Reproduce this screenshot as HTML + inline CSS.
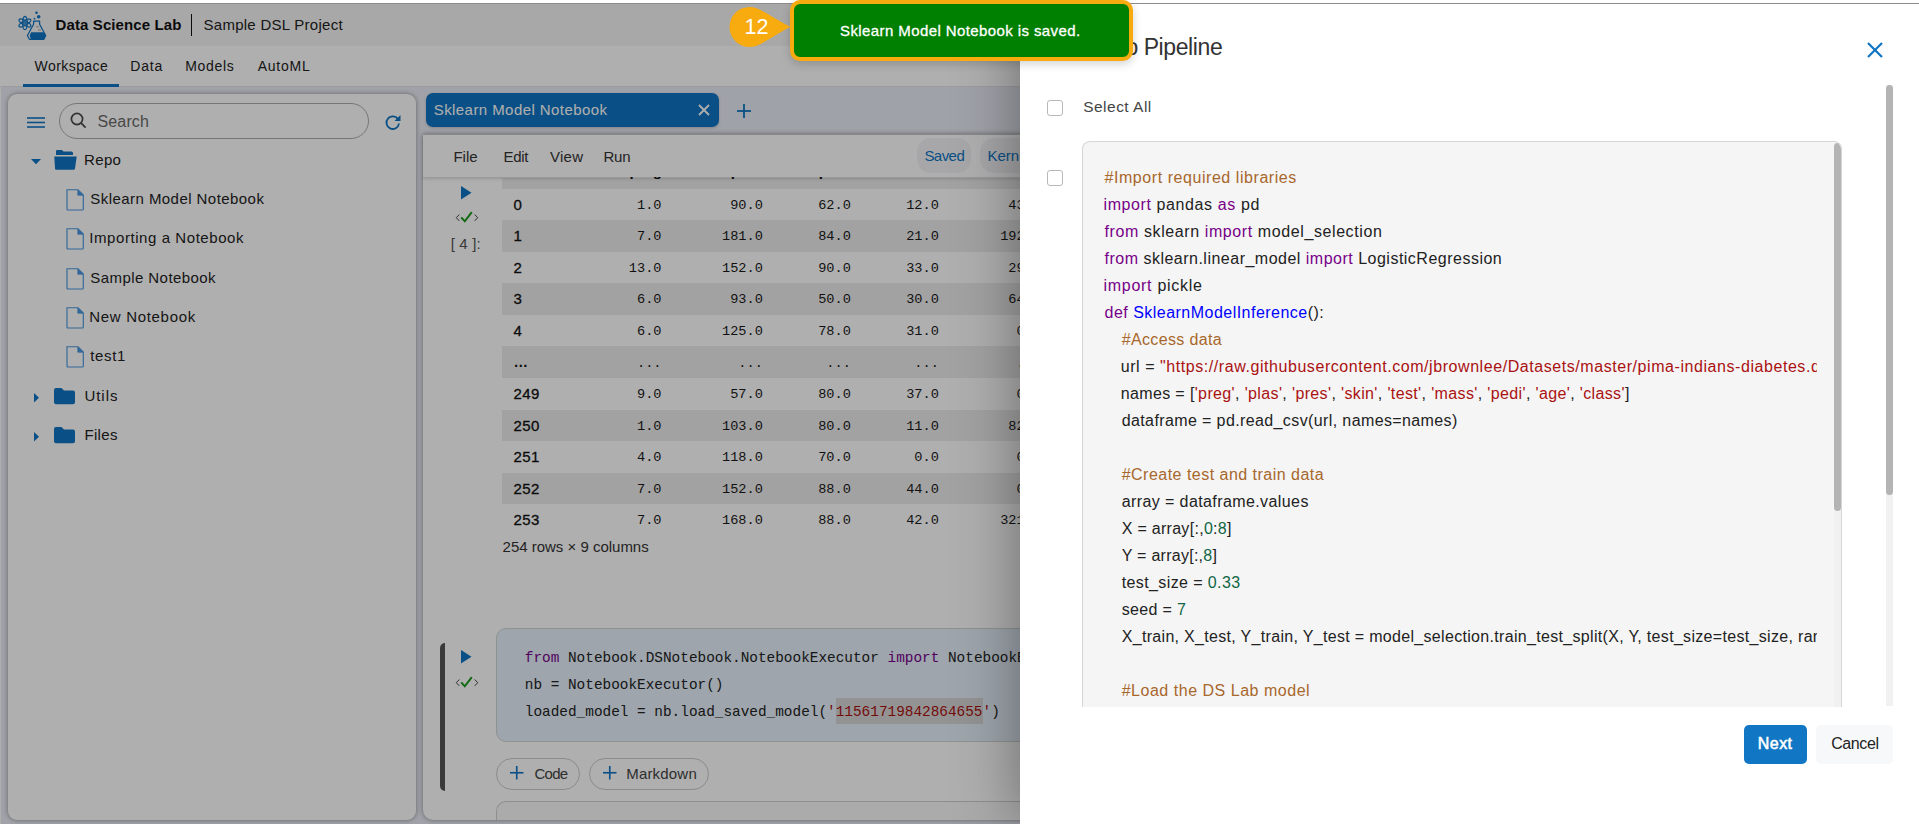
<!DOCTYPE html>
<html><head><meta charset="utf-8">
<style>
*{margin:0;padding:0;box-sizing:border-box}
html,body{width:1919px;height:824px;overflow:hidden;background:#fff;font-family:"Liberation Sans",sans-serif;color:#222;position:relative}
.a{position:absolute}
.t{position:absolute;white-space:nowrap;line-height:1}
.m{font-family:"Liberation Mono",monospace}
svg{position:absolute;overflow:visible}
</style></head>
<body>

<div class="a" style="left:0px;top:4px;width:1919px;height:820px;background:#eaedf6"></div>
<div class="a" style="left:0px;top:4px;width:1919px;height:42px;background:#f5f5f5"></div>
<svg style="left:14px;top:8px" width="38" height="36" viewBox="0 0 38 36">
  <g fill="none" stroke="#0f75c3" stroke-width="1.25">
    <ellipse cx="10.9" cy="15" rx="2.3" ry="6.7"/>
    <ellipse cx="10.9" cy="15" rx="2.3" ry="6.7" transform="rotate(60 10.9 15)"/>
    <ellipse cx="10.9" cy="15" rx="2.3" ry="6.7" transform="rotate(-60 10.9 15)"/>
    <circle cx="10.9" cy="15" r="1.2"/>
  </g>
  <circle cx="22.5" cy="4.8" r="1.3" fill="#0f75c3"/>
  <circle cx="24.7" cy="8.7" r="1.8" fill="#0f75c3"/>
  <circle cx="20.5" cy="10.7" r="0.9" fill="#0f75c3"/>
  <path d="M19.6 13 L25.6 13 L25.6 16.3 L31.7 27.5 L29.9 31.3 L15.4 31.3 L13.4 27.5 L19.6 16.3 Z" fill="none" stroke="#0f75c3" stroke-width="1.25" stroke-linejoin="round"/>
  <path d="M17.2 24.3 L29.6 24.3 L31.7 27.5 L29.9 31.3 L17 31.3 L15.6 27.5 Z" fill="#0f75c3"/>
  <g stroke="#8a8a8a" stroke-width=".7"><line x1="22" y1="18.8" x2="25" y2="18.8"/><line x1="24" y1="22" x2="27" y2="22"/></g>
</svg>
<div class="t" style="left:55.50px;top:17.20px;font-size:15px;color:#111;font-weight:bold;letter-spacing:0.116px;">Data Science Lab</div>
<div class="a" style="left:190.5px;top:14px;width:1.6px;height:22px;background:#111"></div>
<div class="t" style="left:203.50px;top:16.90px;font-size:15px;color:#222;letter-spacing:0.271px;">Sample DSL Project</div>
<div class="a" style="left:0px;top:46px;width:1919px;height:40px;background:#fff"></div>
<div class="a" style="left:0px;top:86px;width:1919px;height:1px;background:#e4e4e4"></div>
<div class="a" style="left:0px;top:87px;width:1px;height:737px;background:#fff"></div>
<div class="t" style="left:34.60px;top:58.95px;font-size:14px;color:#222;letter-spacing:0.427px;">Workspace</div>
<div class="t" style="left:130.25px;top:58.95px;font-size:14px;color:#222;letter-spacing:0.821px;">Data</div>
<div class="t" style="left:185.30px;top:58.95px;font-size:14px;color:#222;letter-spacing:0.654px;">Models</div>
<div class="t" style="left:257.70px;top:58.95px;font-size:14px;color:#222;letter-spacing:0.748px;">AutoML</div>
<div class="a" style="left:23px;top:83.5px;width:96px;height:3px;background:#0f75c3"></div>
<div class="a" style="left:8px;top:94px;width:408px;height:726px;background:#fff;border-radius:9px;box-shadow:0 0 5px rgba(0,0,0,.4)"></div>
<svg style="left:27px;top:117px" width="18" height="11" viewBox="0 0 18 11"><g stroke="#0f75c3" stroke-width="1.6"><line x1="0" y1="1" x2="18" y2="1"/><line x1="0" y1="5.5" x2="18" y2="5.5"/><line x1="0" y1="10" x2="18" y2="10"/></g></svg>
<div class="a" style="left:59px;top:103px;width:310px;height:36px;border:1px solid #adadad;border-radius:18px"></div>
<svg style="left:70px;top:112px" width="18" height="18" viewBox="0 0 18 18"><circle cx="7" cy="7" r="5.6" fill="none" stroke="#4a4a4a" stroke-width="1.7"/><line x1="11.2" y1="11.2" x2="15.6" y2="15.6" stroke="#4a4a4a" stroke-width="1.8"/></svg>
<div class="t" style="left:97.50px;top:113.96px;font-size:16px;color:#6a6a6a;letter-spacing:0.141px;">Search</div>
<svg style="left:384px;top:113px" width="18" height="18" viewBox="0 0 18 18"><path d="M14.2 6.5 A6.3 6.3 0 1 0 15 10.5" fill="none" stroke="#0f75c3" stroke-width="1.8"/><path d="M16.5 2 L16.5 8 L10.5 8 Z" fill="#0f75c3"/></svg>
<svg style="left:31px;top:159px" width="10" height="6" viewBox="0 0 10 6"><path d="M0 0 L10 0 L5 5.2 Z" fill="#0f75c3"/></svg>
<svg style="left:53.5px;top:150px" width="23" height="20" viewBox="0 0 23 20"><path d="M2 1.2 Q2 0 3.2 0 L8 0 L9.5 1.5 L17.5 1.5 Q19 1.5 19 3 L19 5 L2 5 Z" fill="#0f75c3"/><path d="M0.3 6.5 L22.7 6.5 L21 18.5 Q20.8 19.7 19.5 19.7 L2.3 19.7 Q1.2 19.7 1 18.5 Z" fill="#0f75c3"/></svg>
<div class="t" style="left:84.10px;top:152.30px;font-size:15px;color:#222;letter-spacing:0.328px;">Repo</div>
<svg style="left:66px;top:189.0px" width="19" height="22" viewBox="0 0 19 22"><path d="M1 .7 L12 .7 L17.3 6 L17.3 20 Q17.3 21 16.3 21 L2 21 Q1 21 1 20 Z" fill="none" stroke="#4a98de" stroke-width="1.15"/><path d="M11.8 .9 L11.8 6.2 L17.1 6.2 Z" fill="#4a98de" stroke="#4a98de" stroke-width=".8"/></svg>
<div class="t" style="left:90.30px;top:191.10px;font-size:15px;color:#222;letter-spacing:0.445px;">Sklearn Model Notebook</div>
<svg style="left:66px;top:228.3px" width="19" height="22" viewBox="0 0 19 22"><path d="M1 .7 L12 .7 L17.3 6 L17.3 20 Q17.3 21 16.3 21 L2 21 Q1 21 1 20 Z" fill="none" stroke="#4a98de" stroke-width="1.15"/><path d="M11.8 .9 L11.8 6.2 L17.1 6.2 Z" fill="#4a98de" stroke="#4a98de" stroke-width=".8"/></svg>
<div class="t" style="left:89.30px;top:230.40px;font-size:15px;color:#222;letter-spacing:0.568px;">Importing a Notebook</div>
<svg style="left:66px;top:267.6px" width="19" height="22" viewBox="0 0 19 22"><path d="M1 .7 L12 .7 L17.3 6 L17.3 20 Q17.3 21 16.3 21 L2 21 Q1 21 1 20 Z" fill="none" stroke="#4a98de" stroke-width="1.15"/><path d="M11.8 .9 L11.8 6.2 L17.1 6.2 Z" fill="#4a98de" stroke="#4a98de" stroke-width=".8"/></svg>
<div class="t" style="left:90.30px;top:269.70px;font-size:15px;color:#222;letter-spacing:0.433px;">Sample Notebook</div>
<svg style="left:66px;top:306.9px" width="19" height="22" viewBox="0 0 19 22"><path d="M1 .7 L12 .7 L17.3 6 L17.3 20 Q17.3 21 16.3 21 L2 21 Q1 21 1 20 Z" fill="none" stroke="#4a98de" stroke-width="1.15"/><path d="M11.8 .9 L11.8 6.2 L17.1 6.2 Z" fill="#4a98de" stroke="#4a98de" stroke-width=".8"/></svg>
<div class="t" style="left:89.30px;top:309.00px;font-size:15px;color:#222;letter-spacing:0.683px;">New Notebook</div>
<svg style="left:66px;top:346.2px" width="19" height="22" viewBox="0 0 19 22"><path d="M1 .7 L12 .7 L17.3 6 L17.3 20 Q17.3 21 16.3 21 L2 21 Q1 21 1 20 Z" fill="none" stroke="#4a98de" stroke-width="1.15"/><path d="M11.8 .9 L11.8 6.2 L17.1 6.2 Z" fill="#4a98de" stroke="#4a98de" stroke-width=".8"/></svg>
<div class="t" style="left:90.30px;top:348.30px;font-size:15px;color:#222;letter-spacing:0.631px;">test1</div>
<svg style="left:33.5px;top:392.6px" width="6" height="10" viewBox="0 0 6 10"><path d="M0 0 L5 4.7 L0 9.4 Z" fill="#0f75c3"/></svg>
<svg style="left:54px;top:387.8px" width="22" height="17" viewBox="0 0 22 17"><path d="M0 2 Q0 0 2 0 L7.5 0 L10 2.5 L19 2.5 Q21 2.5 21 4.5 L21 14.3 Q21 16.3 19 16.3 L2 16.3 Q0 16.3 0 14.3 Z" fill="#0f75c3"/></svg>
<div class="t" style="left:84.40px;top:388.10px;font-size:15px;color:#222;letter-spacing:0.984px;">Utils</div>
<svg style="left:33.5px;top:431.7px" width="6" height="10" viewBox="0 0 6 10"><path d="M0 0 L5 4.7 L0 9.4 Z" fill="#0f75c3"/></svg>
<svg style="left:54px;top:426.9px" width="22" height="17" viewBox="0 0 22 17"><path d="M0 2 Q0 0 2 0 L7.5 0 L10 2.5 L19 2.5 Q21 2.5 21 4.5 L21 14.3 Q21 16.3 19 16.3 L2 16.3 Q0 16.3 0 14.3 Z" fill="#0f75c3"/></svg>
<div class="t" style="left:84.40px;top:427.20px;font-size:15px;color:#222;letter-spacing:0.358px;">Files</div>
<div class="a" style="left:426px;top:93px;width:293px;height:34px;background:#0f75c3;border-radius:7px;box-shadow:0 1px 3px rgba(0,0,0,.2)"></div>
<div class="t" style="left:433.70px;top:102.40px;font-size:15px;color:#fff;letter-spacing:0.435px;">Sklearn Model Notebook</div>
<svg style="left:698px;top:104px" width="12" height="12" viewBox="0 0 12 12"><g stroke="#fff" stroke-width="1.8"><line x1="1" y1="1" x2="11" y2="11"/><line x1="11" y1="1" x2="1" y2="11"/></g></svg>
<svg style="left:737px;top:104px" width="14" height="14" viewBox="0 0 14 14"><g stroke="#0f75c3" stroke-width="1.8"><line x1="7" y1="0" x2="7" y2="14"/><line x1="0" y1="7" x2="14" y2="7"/></g></svg>
<div class="a" style="left:423px;top:134px;width:720px;height:686px;background:#fff;border-radius:0 0 10px 10px;box-shadow:0 0 5px rgba(0,0,0,.4)"></div>
<div class="a" style="left:502px;top:178px;width:640px;height:10.7px;background:#ececec"></div>
<div class="t" style="left:629.50px;top:162.80px;font-size:15px;color:#111;font-weight:bold;">preg</div>
<div class="t" style="left:730.80px;top:162.80px;font-size:15px;color:#111;font-weight:bold;">plas</div>
<div class="t" style="left:818.80px;top:162.80px;font-size:15px;color:#111;font-weight:bold;">pres</div>
<div class="t" style="left:906.80px;top:162.80px;font-size:15px;color:#111;font-weight:bold;">skin</div>
<div class="t" style="left:1009.00px;top:162.80px;font-size:15px;color:#111;font-weight:bold;">test</div>
<div class="t" style="left:513.50px;top:196.75px;font-size:15px;color:#111;letter-spacing:0.350px;-webkit-text-stroke:.3px #111;">0</div>
<div class="t m" style="left:637.02px;top:198.83px;font-size:13.6px;color:#1a1a1a;">1.0</div>
<div class="t m" style="left:730.16px;top:198.83px;font-size:13.6px;color:#1a1a1a;">90.0</div>
<div class="t m" style="left:818.16px;top:198.83px;font-size:13.6px;color:#1a1a1a;">62.0</div>
<div class="t m" style="left:906.16px;top:198.83px;font-size:13.6px;color:#1a1a1a;">12.0</div>
<div class="t m" style="left:1008.36px;top:198.83px;font-size:13.6px;color:#1a1a1a;">43.0</div>
<div class="a" style="left:502px;top:220.2px;width:640px;height:31.5px;background:#ececec"></div>
<div class="t" style="left:513.50px;top:228.30px;font-size:15px;color:#111;letter-spacing:0.350px;-webkit-text-stroke:.3px #111;">1</div>
<div class="t m" style="left:637.02px;top:230.38px;font-size:13.6px;color:#1a1a1a;">7.0</div>
<div class="t m" style="left:722.00px;top:230.38px;font-size:13.6px;color:#1a1a1a;">181.0</div>
<div class="t m" style="left:818.16px;top:230.38px;font-size:13.6px;color:#1a1a1a;">84.0</div>
<div class="t m" style="left:906.16px;top:230.38px;font-size:13.6px;color:#1a1a1a;">21.0</div>
<div class="t m" style="left:1000.20px;top:230.38px;font-size:13.6px;color:#1a1a1a;">192.0</div>
<div class="t" style="left:513.50px;top:259.85px;font-size:15px;color:#111;letter-spacing:0.350px;-webkit-text-stroke:.3px #111;">2</div>
<div class="t m" style="left:628.86px;top:261.93px;font-size:13.6px;color:#1a1a1a;">13.0</div>
<div class="t m" style="left:722.00px;top:261.93px;font-size:13.6px;color:#1a1a1a;">152.0</div>
<div class="t m" style="left:818.16px;top:261.93px;font-size:13.6px;color:#1a1a1a;">90.0</div>
<div class="t m" style="left:906.16px;top:261.93px;font-size:13.6px;color:#1a1a1a;">33.0</div>
<div class="t m" style="left:1008.36px;top:261.93px;font-size:13.6px;color:#1a1a1a;">29.0</div>
<div class="a" style="left:502px;top:283.4px;width:640px;height:31.5px;background:#ececec"></div>
<div class="t" style="left:513.50px;top:291.40px;font-size:15px;color:#111;letter-spacing:0.350px;-webkit-text-stroke:.3px #111;">3</div>
<div class="t m" style="left:637.02px;top:293.48px;font-size:13.6px;color:#1a1a1a;">6.0</div>
<div class="t m" style="left:730.16px;top:293.48px;font-size:13.6px;color:#1a1a1a;">93.0</div>
<div class="t m" style="left:818.16px;top:293.48px;font-size:13.6px;color:#1a1a1a;">50.0</div>
<div class="t m" style="left:906.16px;top:293.48px;font-size:13.6px;color:#1a1a1a;">30.0</div>
<div class="t m" style="left:1008.36px;top:293.48px;font-size:13.6px;color:#1a1a1a;">64.0</div>
<div class="t" style="left:513.50px;top:322.95px;font-size:15px;color:#111;letter-spacing:0.350px;-webkit-text-stroke:.3px #111;">4</div>
<div class="t m" style="left:637.02px;top:325.03px;font-size:13.6px;color:#1a1a1a;">6.0</div>
<div class="t m" style="left:722.00px;top:325.03px;font-size:13.6px;color:#1a1a1a;">125.0</div>
<div class="t m" style="left:818.16px;top:325.03px;font-size:13.6px;color:#1a1a1a;">78.0</div>
<div class="t m" style="left:906.16px;top:325.03px;font-size:13.6px;color:#1a1a1a;">31.0</div>
<div class="t m" style="left:1016.52px;top:325.03px;font-size:13.6px;color:#1a1a1a;">0.0</div>
<div class="a" style="left:502px;top:346.4px;width:640px;height:31.5px;background:#ececec"></div>
<div class="t" style="left:513.50px;top:354.93px;font-size:14.5px;color:#111;font-weight:bold;">…</div>
<div class="t m" style="left:637.02px;top:356.58px;font-size:13.6px;color:#1a1a1a;">...</div>
<div class="t m" style="left:738.32px;top:356.58px;font-size:13.6px;color:#1a1a1a;">...</div>
<div class="t m" style="left:826.32px;top:356.58px;font-size:13.6px;color:#1a1a1a;">...</div>
<div class="t m" style="left:914.32px;top:356.58px;font-size:13.6px;color:#1a1a1a;">...</div>
<div class="t m" style="left:1016.52px;top:356.58px;font-size:13.6px;color:#1a1a1a;">...</div>
<div class="t" style="left:513.50px;top:386.05px;font-size:15px;color:#111;letter-spacing:0.350px;-webkit-text-stroke:.3px #111;">249</div>
<div class="t m" style="left:637.02px;top:388.13px;font-size:13.6px;color:#1a1a1a;">9.0</div>
<div class="t m" style="left:730.16px;top:388.13px;font-size:13.6px;color:#1a1a1a;">57.0</div>
<div class="t m" style="left:818.16px;top:388.13px;font-size:13.6px;color:#1a1a1a;">80.0</div>
<div class="t m" style="left:906.16px;top:388.13px;font-size:13.6px;color:#1a1a1a;">37.0</div>
<div class="t m" style="left:1016.52px;top:388.13px;font-size:13.6px;color:#1a1a1a;">0.0</div>
<div class="a" style="left:502px;top:409.5px;width:640px;height:31.5px;background:#ececec"></div>
<div class="t" style="left:513.50px;top:417.60px;font-size:15px;color:#111;letter-spacing:0.350px;-webkit-text-stroke:.3px #111;">250</div>
<div class="t m" style="left:637.02px;top:419.68px;font-size:13.6px;color:#1a1a1a;">1.0</div>
<div class="t m" style="left:722.00px;top:419.68px;font-size:13.6px;color:#1a1a1a;">103.0</div>
<div class="t m" style="left:818.16px;top:419.68px;font-size:13.6px;color:#1a1a1a;">80.0</div>
<div class="t m" style="left:906.16px;top:419.68px;font-size:13.6px;color:#1a1a1a;">11.0</div>
<div class="t m" style="left:1008.36px;top:419.68px;font-size:13.6px;color:#1a1a1a;">82.0</div>
<div class="t" style="left:513.50px;top:449.15px;font-size:15px;color:#111;letter-spacing:0.350px;-webkit-text-stroke:.3px #111;">251</div>
<div class="t m" style="left:637.02px;top:451.23px;font-size:13.6px;color:#1a1a1a;">4.0</div>
<div class="t m" style="left:722.00px;top:451.23px;font-size:13.6px;color:#1a1a1a;">118.0</div>
<div class="t m" style="left:818.16px;top:451.23px;font-size:13.6px;color:#1a1a1a;">70.0</div>
<div class="t m" style="left:914.32px;top:451.23px;font-size:13.6px;color:#1a1a1a;">0.0</div>
<div class="t m" style="left:1016.52px;top:451.23px;font-size:13.6px;color:#1a1a1a;">0.0</div>
<div class="a" style="left:502px;top:472.6px;width:640px;height:31.5px;background:#ececec"></div>
<div class="t" style="left:513.50px;top:480.70px;font-size:15px;color:#111;letter-spacing:0.350px;-webkit-text-stroke:.3px #111;">252</div>
<div class="t m" style="left:637.02px;top:482.78px;font-size:13.6px;color:#1a1a1a;">7.0</div>
<div class="t m" style="left:722.00px;top:482.78px;font-size:13.6px;color:#1a1a1a;">152.0</div>
<div class="t m" style="left:818.16px;top:482.78px;font-size:13.6px;color:#1a1a1a;">88.0</div>
<div class="t m" style="left:906.16px;top:482.78px;font-size:13.6px;color:#1a1a1a;">44.0</div>
<div class="t m" style="left:1016.52px;top:482.78px;font-size:13.6px;color:#1a1a1a;">0.0</div>
<div class="t" style="left:513.50px;top:512.25px;font-size:15px;color:#111;letter-spacing:0.350px;-webkit-text-stroke:.3px #111;">253</div>
<div class="t m" style="left:637.02px;top:514.33px;font-size:13.6px;color:#1a1a1a;">7.0</div>
<div class="t m" style="left:722.00px;top:514.33px;font-size:13.6px;color:#1a1a1a;">168.0</div>
<div class="t m" style="left:818.16px;top:514.33px;font-size:13.6px;color:#1a1a1a;">88.0</div>
<div class="t m" style="left:906.16px;top:514.33px;font-size:13.6px;color:#1a1a1a;">42.0</div>
<div class="t m" style="left:1000.20px;top:514.33px;font-size:13.6px;color:#1a1a1a;">321.0</div>
<div class="t" style="left:502.60px;top:539.30px;font-size:15px;color:#333;letter-spacing:-0.012px;">254 rows × 9 columns</div>
<svg style="left:460.5px;top:185.5px" width="11" height="14" viewBox="0 0 11 14"><path d="M0 0 L10.5 6.7 L0 13.5 Z" fill="#0f75c3"/></svg>
<svg style="left:455px;top:211px" width="24" height="12" viewBox="0 0 24 12"><g fill="none" stroke="#3a3a3a" stroke-width=".95"><path d="M4.3 3.5 L1.3 6.7 L4.3 9.9"/><path d="M19.7 3.5 L22.7 6.7 L19.7 9.9"/></g><path d="M6.2 6.3 L9.8 10.3 L16.8 1.2" fill="none" stroke="#1a9a1a" stroke-width="2"/></svg>
<div class="t" style="left:450.70px;top:235.60px;font-size:15px;color:#555;letter-spacing:0.158px;">[ 4 ]:</div>
<div class="a" style="left:423px;top:133.5px;width:720px;height:43.5px;background:#fff;border-top:1px solid #c8c8c8;box-shadow:0 2px 3px rgba(0,0,0,.15)"></div>
<div class="t" style="left:453.50px;top:149.40px;font-size:15px;color:#333;letter-spacing:-0.043px;">File</div>
<div class="t" style="left:503.50px;top:149.40px;font-size:15px;color:#333;letter-spacing:-0.293px;">Edit</div>
<div class="t" style="left:550.10px;top:149.40px;font-size:15px;color:#333;letter-spacing:0.230px;">View</div>
<div class="t" style="left:603.40px;top:149.40px;font-size:15px;color:#333;letter-spacing:-0.187px;">Run</div>
<div class="a" style="left:917px;top:138px;width:54px;height:35px;background:#f3f4f6;border-radius:14px"></div>
<div class="t" style="left:924.40px;top:147.90px;font-size:15px;color:#0f75c3;letter-spacing:-0.547px;">Saved</div>
<div class="a" style="left:980px;top:138px;width:80px;height:35px;background:#f3f4f6;border-radius:14px"></div>
<div class="t" style="left:987.50px;top:147.90px;font-size:15px;color:#0f75c3;">Kernel</div>
<div class="a" style="left:440px;top:642.5px;width:5.2px;height:148.5px;background:#555;border-radius:5px 0 0 5px"></div>
<svg style="left:460.5px;top:650px" width="11" height="14" viewBox="0 0 11 14"><path d="M0 0 L10.5 6.7 L0 13.5 Z" fill="#0f75c3"/></svg>
<svg style="left:455px;top:676px" width="24" height="12" viewBox="0 0 24 12"><g fill="none" stroke="#3a3a3a" stroke-width=".95"><path d="M4.3 3.5 L1.3 6.7 L4.3 9.9"/><path d="M19.7 3.5 L22.7 6.7 L19.7 9.9"/></g><path d="M6.2 6.3 L9.8 10.3 L16.8 1.2" fill="none" stroke="#1a9a1a" stroke-width="2"/></svg>
<div class="a" style="left:496.4px;top:627.6px;width:700px;height:114px;background:#e6f0fb;border:1px solid #cfd6d0;border-radius:10px"></div>
<div class="a" style="left:836px;top:698.2px;width:147px;height:26.2px;background:#d6d6d6"></div>
<div class="t m" style="left:524.80px;top:651.46px;font-size:14.4px;color:#222;"><span style="color:#770088">from</span><span style="color:#222"> Notebook.DSNotebook.NotebookExecutor </span><span style="color:#770088">import</span><span style="color:#222"> NotebookExecutor</span></div>
<div class="t m" style="left:524.80px;top:678.26px;font-size:14.4px;color:#222;"><span style="color:#222">nb = NotebookExecutor()</span></div>
<div class="t m" style="left:524.80px;top:705.26px;font-size:14.4px;color:#222;"><span style="color:#222">loaded_model = nb.load_saved_model(</span><span style="color:#aa1111">'11561719842864655'</span><span style="color:#222">)</span></div>
<div class="a" style="left:496.2px;top:758.2px;width:83.5px;height:32.3px;border:1px solid #cbcbcb;border-radius:16px"></div>
<svg style="left:510.1px;top:766px" width="13.5" height="13.5" viewBox="0 0 14 14"><g stroke="#0f75c3" stroke-width="1.7"><line x1="7" y1="0" x2="7" y2="14"/><line x1="0" y1="7" x2="14" y2="7"/></g></svg>
<div class="t" style="left:534.60px;top:766.40px;font-size:15px;color:#444;letter-spacing:-0.806px;">Code</div>
<div class="a" style="left:589.2px;top:758.2px;width:119.5px;height:32.3px;border:1px solid #cbcbcb;border-radius:16px"></div>
<svg style="left:602.7px;top:766px" width="13.5" height="13.5" viewBox="0 0 14 14"><g stroke="#0f75c3" stroke-width="1.7"><line x1="7" y1="0" x2="7" y2="14"/><line x1="0" y1="7" x2="14" y2="7"/></g></svg>
<div class="t" style="left:626.20px;top:766.40px;font-size:15px;color:#444;letter-spacing:0.193px;">Markdown</div>
<div class="a" style="left:496.3px;top:801px;width:700px;height:19px;background:#fafafa;border:1px solid #d0d0d0;border-bottom:none;border-radius:10px 10px 0 0"></div>
<div class="a" style="left:0px;top:4px;width:1919px;height:820px;background:rgba(0,0,0,.314)"></div>
<div class="a" style="left:1020px;top:4px;width:899px;height:820px;background:#fff;box-shadow:0 0 60px rgba(0,0,0,.4)"></div>
<div class="t" style="left:1143.70px;top:36.43px;font-size:23px;color:#333;letter-spacing:-0.406px;">Pipeline</div>
<div class="t" style="left:1125.60px;top:36.43px;font-size:23px;color:#333;">o</div>
<svg style="left:1867px;top:42px" width="16" height="16" viewBox="0 0 16 16"><g stroke="#0f75c3" stroke-width="2.2"><line x1="1" y1="1" x2="15" y2="15"/><line x1="15" y1="1" x2="1" y2="15"/></g></svg>
<div class="a" style="left:1047.2px;top:100.3px;width:15.5px;height:15.5px;border:1px solid #b8b8b8;border-radius:3px"></div>
<div class="t" style="left:1083.20px;top:98.68px;font-size:15.5px;color:#444;letter-spacing:0.481px;">Select All</div>
<div class="a" style="left:1047.2px;top:170px;width:15.5px;height:15.5px;border:1px solid #b8b8b8;border-radius:3px"></div>
<div class="a" style="left:1081.5px;top:141.2px;width:760px;height:565.5px;overflow:hidden;background:#f5f5f5;border:1px solid #d6d6d6;border-bottom:none;border-radius:8px 8px 0 0">
<div class="t" style="left:22.00px;top:28.06px;font-size:16px;color:#222;letter-spacing:0.558px;"><span style="color:#a8672c">#Import required libraries</span></div>
<div class="t" style="left:21.00px;top:55.06px;font-size:16px;color:#222;letter-spacing:0.601px;"><span style="color:#770088">import</span><span style="color:#222"> pandas </span><span style="color:#770088">as</span><span style="color:#222"> pd</span></div>
<div class="t" style="left:22.00px;top:82.06px;font-size:16px;color:#222;letter-spacing:0.597px;"><span style="color:#770088">from</span><span style="color:#222"> sklearn </span><span style="color:#770088">import</span><span style="color:#222"> model_selection</span></div>
<div class="t" style="left:22.00px;top:109.06px;font-size:16px;color:#222;letter-spacing:0.492px;"><span style="color:#770088">from</span><span style="color:#222"> sklearn.linear_model </span><span style="color:#770088">import</span><span style="color:#222"> LogisticRegression</span></div>
<div class="t" style="left:21.00px;top:136.06px;font-size:16px;color:#222;letter-spacing:0.716px;"><span style="color:#770088">import</span><span style="color:#222"> pickle</span></div>
<div class="t" style="left:22.00px;top:163.06px;font-size:16px;color:#222;letter-spacing:0.478px;"><span style="color:#770088">def</span><span style="color:#222"> </span><span style="color:#0000ff">SklearnModelInference</span><span style="color:#222">():</span></div>
<div class="t" style="left:39.20px;top:190.06px;font-size:16px;color:#222;letter-spacing:0.359px;"><span style="color:#a8672c">#Access data</span></div>
<div class="t" style="left:38.20px;top:217.06px;font-size:16px;color:#222;letter-spacing:0.562px;"><span style="color:#222">url = </span><span style="color:#aa1111">"https://raw.githubusercontent.com/jbrownlee/Datasets/master/pima-indians-diabetes.data.csv"</span></div>
<div class="t" style="left:38.20px;top:244.06px;font-size:16px;color:#222;letter-spacing:0.367px;"><span style="color:#222">names = [</span><span style="color:#aa1111">'preg'</span><span style="color:#222">, </span><span style="color:#aa1111">'plas'</span><span style="color:#222">, </span><span style="color:#aa1111">'pres'</span><span style="color:#222">, </span><span style="color:#aa1111">'skin'</span><span style="color:#222">, </span><span style="color:#aa1111">'test'</span><span style="color:#222">, </span><span style="color:#aa1111">'mass'</span><span style="color:#222">, </span><span style="color:#aa1111">'pedi'</span><span style="color:#222">, </span><span style="color:#aa1111">'age'</span><span style="color:#222">, </span><span style="color:#aa1111">'class'</span><span style="color:#222">]</span></div>
<div class="t" style="left:39.20px;top:271.06px;font-size:16px;color:#222;letter-spacing:0.387px;"><span style="color:#222">dataframe = pd.read_csv(url, names=names)</span></div>
<div class="t" style="left:39.20px;top:325.06px;font-size:16px;color:#222;letter-spacing:0.479px;"><span style="color:#a8672c">#Create test and train data</span></div>
<div class="t" style="left:39.20px;top:352.06px;font-size:16px;color:#222;letter-spacing:0.403px;"><span style="color:#222">array = dataframe.values</span></div>
<div class="t" style="left:39.20px;top:379.06px;font-size:16px;color:#222;letter-spacing:0.291px;"><span style="color:#222">X = array[:,</span><span style="color:#116644">0</span><span style="color:#222">:</span><span style="color:#116644">8</span><span style="color:#222">]</span></div>
<div class="t" style="left:39.20px;top:406.06px;font-size:16px;color:#222;letter-spacing:0.270px;"><span style="color:#222">Y = array[:,</span><span style="color:#116644">8</span><span style="color:#222">]</span></div>
<div class="t" style="left:39.20px;top:433.06px;font-size:16px;color:#222;letter-spacing:0.392px;"><span style="color:#222">test_size = </span><span style="color:#116644">0.33</span></div>
<div class="t" style="left:39.20px;top:460.06px;font-size:16px;color:#222;letter-spacing:0.324px;"><span style="color:#222">seed = </span><span style="color:#116644">7</span></div>
<div class="t" style="left:39.20px;top:487.06px;font-size:16px;color:#222;letter-spacing:0.316px;"><span style="color:#222">X_train, X_test, Y_train, Y_test = model_selection.train_test_split(X, Y, test_size=test_size, random_state=seed)</span></div>
<div class="t" style="left:39.20px;top:541.06px;font-size:16px;color:#222;letter-spacing:0.521px;"><span style="color:#a8672c">#Load the DS Lab model</span></div>
<div class="a" style="left:734px;top:0;width:26px;height:566px;background:#f5f5f5"></div>
<div class="a" style="left:751.5px;top:0;width:7px;height:566px;background:#f1f1f1"></div>
<div class="a" style="left:751.5px;top:1px;width:7px;height:368px;background:#b4b4b4;border-radius:4px"></div>
</div>
<div class="a" style="left:1886px;top:85px;width:7px;height:621px;background:#f1f1f1"></div>
<div class="a" style="left:1886px;top:85px;width:7px;height:410px;background:#b4b4b4;border-radius:4px"></div>
<div class="a" style="left:1744px;top:725px;width:63px;height:38.6px;background:#1177c4;border-radius:5px"></div>
<div class="t" style="left:1757.80px;top:735.56px;font-size:16px;color:#fff;letter-spacing:0.449px;-webkit-text-stroke:.55px #fff;">Next</div>
<div class="a" style="left:1816px;top:725px;width:77px;height:38.6px;background:#f7f8fa;border-radius:5px"></div>
<div class="t" style="left:1831.20px;top:735.56px;font-size:16px;color:#222;letter-spacing:-0.410px;">Cancel</div>
<div class="a" style="left:0px;top:0px;width:1919px;height:3px;background:#fff"></div>
<div class="a" style="left:0px;top:3px;width:1919px;height:1px;background:#8c8c8c"></div>
<div class="a" style="left:790px;top:-0.2px;width:343px;height:61.2px;background:#008000;border:4px solid #f7ab0f;border-radius:10px;box-shadow:0 3px 10px rgba(0,0,0,.18)"></div>
<div class="t" style="left:840.00px;top:22.90px;font-size:15px;color:#fff;letter-spacing:0.405px;-webkit-text-stroke:.3px #fff;">Sklearn Model Notebook is saved.</div>
<svg style="left:729px;top:7px" width="62" height="40" viewBox="0 0 62 40"><path d="M20.5 0 C31 0 40 9 61.5 19.8 C40 31 31 40 20.5 40 A20 20 0 0 1 20.5 0 Z" fill="#f7ab0f"/></svg>
<div class="t" style="left:744.50px;top:16.60px;font-size:21.5px;color:#fff;">12</div>
</body></html>
